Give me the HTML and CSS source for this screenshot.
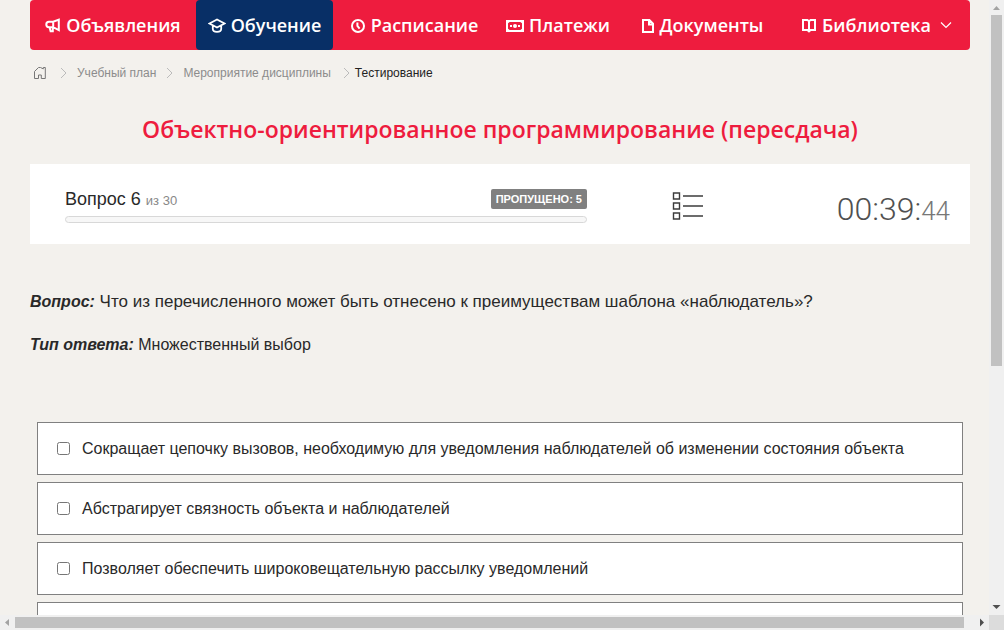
FILE: index.html
```html
<!DOCTYPE html>
<html lang="ru">
<head>
<meta charset="utf-8">
<meta name="viewport" content="width=device-width, initial-scale=1">
<title>Тестирование</title>
<link rel="stylesheet" href="styles.css">
</head>
<body>
<div class="window">
  <div class="viewport">
    <nav class="menu" aria-label="Главное меню">
      <a class="menu-item" href="#">
        <svg class="icon" width="16" height="16" viewBox="0 0 16 16"><path d="M4 4.8h4.2L13.8 2.6v10.6L8.2 10.200H4a2.700 2.700 0 0 1 0-5.400ZM8.200 4.800v5.400M4.600 10.500l1 3.800h2.200v-3.800"/></svg>
        <span>Объявления</span>
      </a>
      <a class="menu-item menu-item-active" href="#">
        <svg class="icon icon-thin" width="18" height="16" viewBox="0 0 18 16"><path d="M1.500 6.500 9 2.500l7.500 4L9 10.500ZM4.800 9v3c0 1.600 1.600 2.800 4.200 2.800s4.200-1.200 4.200-2.800V9"/></svg>
        <span>Обучение</span>
      </a>
      <a class="menu-item" href="#">
        <svg class="icon" width="16" height="16" viewBox="0 0 16 16"><circle cx="8" cy="9" r="6"/><path d="M7.400 5.400V9l2.200 2.600"/></svg>
        <span>Расписание</span>
      </a>
      <a class="menu-item" href="#">
        <svg class="icon" width="18" height="16" viewBox="0 0 18 16"><path d="M1 4h16v10H1Z"/><path class="solid" d="M1 4h4L1 7ZM17 4h-4l4 3ZM1 14h4l-4-3ZM17 14h-4l4-3ZM4 8h2v2H4ZM12 8h2v2h-2Z"/><circle class="solid" cx="9" cy="9" r="2"/></svg>
        <span>Платежи</span>
      </a>
      <a class="menu-item" href="#">
        <svg class="icon" width="14" height="16" viewBox="0 0 14 16"><path d="M2 3h6.400L12 6.600V15H2ZM8 3v4.500h4"/></svg>
        <span>Документы</span>
      </a>
      <a class="menu-item" href="#">
        <svg class="icon" width="16" height="16" viewBox="0 0 16 16"><path d="M2 3h4.400L8 4.200 9.600 3H14v10H9.600L8 14.400 6.400 13H2ZM8 4v10"/></svg>
        <span>Библиотека</span>
        <svg class="chevron" width="12" height="8" viewBox="0 0 12 8"><path d="m1 1.500 5 5 5-5"/></svg>
      </a>
    </nav>

    <nav class="crumbs" aria-label="Навигация">
      <a class="crumb-home" href="#" aria-label="Главная"><svg width="14" height="14" viewBox="0 0 14 14"><path d="M1.500 5.500v7h4V9h2.800v3.500h4v-11h-2v1.400L7.500 1.500h-2l-4 4"/></svg></a>
      <svg class="crumb-arrow" width="7" height="12" viewBox="0 0 7 12"><path d="m1 1 5 5-5 5"/></svg>
      <a class="crumb" href="#">Учебный план</a>
      <svg class="crumb-arrow" width="7" height="12" viewBox="0 0 7 12"><path d="m1 1 5 5-5 5"/></svg>
      <a class="crumb crumb-wide" href="#">Мероприятие дисциплины</a>
      <svg class="crumb-arrow" width="7" height="12" viewBox="0 0 7 12"><path d="m1 1 5 5-5 5"/></svg>
      <span class="crumb-current">Тестирование</span>
    </nav>

    <h1 class="title">Объектно-ориентированное программирование (пересдача)</h1>

    <section class="status">
      <div class="progress">
        <div class="progress-head">
          <div class="progress-label">Вопрос 6 <small class="progress-total">из 30</small></div>
          <span class="badge">ПРОПУЩЕНО: 5</span>
        </div>
        <div class="bar"></div>
      </div>
      <button class="list-button" type="button" aria-label="Список вопросов">
        <svg width="32" height="30" viewBox="0 0 32 30"><path d="M1.500 2h6v6h-6ZM1.500 12h6v6h-6ZM1.500 22h6v6h-6ZM11 5h20M11 15h20M11 25h20"/></svg>
      </button>
      <div class="timer">00:39:<span class="timer-seconds">44</span></div>
    </section>

    <p class="question"><b class="lead">Вопрос:</b> Что из перечисленного может быть отнесено к преимуществам шаблона «наблюдатель»?</p>
    <p class="answer-type"><b class="lead">Тип ответа:</b> Множественный выбор</p>

    <form class="answers">
      <label class="answer"><input class="check" type="checkbox"><span>Сокращает цепочку вызовов, необходимую для уведомления наблюдателей об изменении состояния объекта</span></label>
      <label class="answer"><input class="check" type="checkbox"><span>Абстрагирует связность объекта и наблюдателей</span></label>
      <label class="answer"><input class="check" type="checkbox"><span>Позволяет обеспечить широковещательную рассылку уведомлений</span></label>
      <div class="answer"></div>
    </form>
  </div>

  <div class="scroll scroll-y">
    <svg class="off" width="15" height="15" viewBox="0 0 15 15"><path d="M4 10h7L7.500 6Z"/></svg>
    <div class="track track-y"><div class="thumb"></div></div>
    <svg class="on" width="15" height="15" viewBox="0 0 15 15"><path d="M3.500 5h8l-4 4Z"/></svg>
  </div>
  <div class="scroll scroll-x">
    <svg class="off" width="15" height="15" viewBox="0 0 15 15"><path d="M9 4v7L5 7.500Z"/></svg>
    <div class="track track-x"><div class="thumb"></div></div>
    <svg class="on" width="15" height="15" viewBox="0 0 15 15"><path d="M6 3.500v8l4-4Z"/></svg>
  </div>
  <div class="corner"></div>
</div>
</body>
</html>
```
FILE: styles.css
```css
* { box-sizing: border-box; }
body {
  margin: 0;
  background: #f3f1ed;
  color: #292929;
  font: 16px/24px "Liberation Sans", Arial, sans-serif;
}
a { color: inherit; text-decoration: none; }
svg { display: block; flex: none; }

.window {
  display: grid;
  grid-template-columns: minmax(0, 1fr) 15px;
  grid-template-rows: minmax(0, 1fr) 15px;
  height: 100vh;
}
.viewport { overflow: hidden; padding: 0 19px 0 30px; }

.menu {
  display: grid;
  grid-template-columns: 166fr 137fr 162fr 126fr 162fr 187fr;
  height: 50px;
  border-radius: 4px;
  background: #ee1c3e;
  color: #fff;
  font: 600 18px/24px "Open Sans", sans-serif;
}
.menu-item {
  display: flex;
  align-items: center;
  justify-content: center;
  gap: 5px;
  min-width: 0;
  border-radius: 4px;
  white-space: nowrap;
}
.menu-item-active { background: #082f66; }
.icon { fill: none; stroke: #fff; stroke-width: 2; }
.icon-thin { stroke-width: 1.8; }
.icon .solid { fill: #fff; stroke: none; }
.chevron { margin-left: 4px; fill: none; stroke: #fff; stroke-width: 1.2; }

.crumbs {
  display: flex;
  align-items: center;
  gap: 10px;
  height: 46px;
  padding-left: 3px;
  color: #8c8c8c;
  font-size: 12px;
  line-height: 16px;
}
.crumb-home { margin-right: 3px; }
.crumb-home svg { fill: none; stroke: #777; stroke-width: 1; }
.crumb-arrow { fill: none; stroke: #bbb; stroke-width: 1; }
.crumb-wide { margin-right: 2px; }
.crumb-current { margin-left: -5px; color: #222; }

.title {
  margin: 16px 0 18px;
  color: #ee1c3e;
  font: 600 23px/34px "Open Sans", sans-serif;
  text-align: center;
}

.status {
  display: grid;
  grid-template-columns: 522fr 230fr 133fr;
  height: 80px;
  padding: 0 20px 0 35px;
  background: #fff;
}
.progress { padding-top: 25px; }
.progress-head { display: flex; justify-content: space-between; height: 20px; }
.progress-label { font-size: 18px; line-height: 20px; }
.progress-total { color: #888; font-size: 13px; }
.badge {
  padding: 0 5px;
  border-radius: 2px;
  background: #808080;
  color: #fff;
  font-size: 11px;
  font-weight: 700;
  line-height: 20px;
}
.bar {
  height: 7px;
  margin-top: 7px;
  border: 1px solid #d8d8d8;
  border-radius: 4px;
  background: #f7f7f7;
}
.list-button {
  justify-self: center;
  align-self: center;
  margin: 4px 28px 0 0;
  padding: 0;
  border: 0;
  background: none;
}
.list-button svg { fill: none; stroke: #3c3c3c; stroke-width: 1.4; }
.timer {
  padding-top: 25px;
  color: #505050;
  font: 300 32px/40px Roboto, sans-serif;
  text-align: right;
  white-space: nowrap;
}
.timer-seconds { color: #777; font-size: 26px; }

.question { margin: 46px 0 0; font-size: 17px; }
.lead { font-size: 16px; font-style: italic; }
.answer-type { margin: 19px 0 0; }

.answers { display: grid; gap: 7px; margin: 65px 7px 0; }
.answer {
  display: flex;
  align-items: center;
  gap: 12px;
  min-height: 53px;
  padding: 0 19px;
  border: 1px solid #808080;
  background: #fff;
}
.check { flex: none; width: 13px; height: 13px; margin: 0; }

.scroll { display: flex; background: #f0f0f0; }
.scroll-y { flex-direction: column; }
.scroll-x { grid-row: 2; }
.track { display: flex; flex: 1; }
.track-y { flex-direction: column; padding: 0 2px; }
.track-x { padding: 2px 0; }
.thumb { background: #c1c1c1; }
.track-y .thumb { flex: 0 0 60%; }
.track-x .thumb { flex: 0 0 99%; }
.off { fill: #a3a3a3; }
.on { fill: #505050; }
.corner { background: #dcdcdc; }
```
